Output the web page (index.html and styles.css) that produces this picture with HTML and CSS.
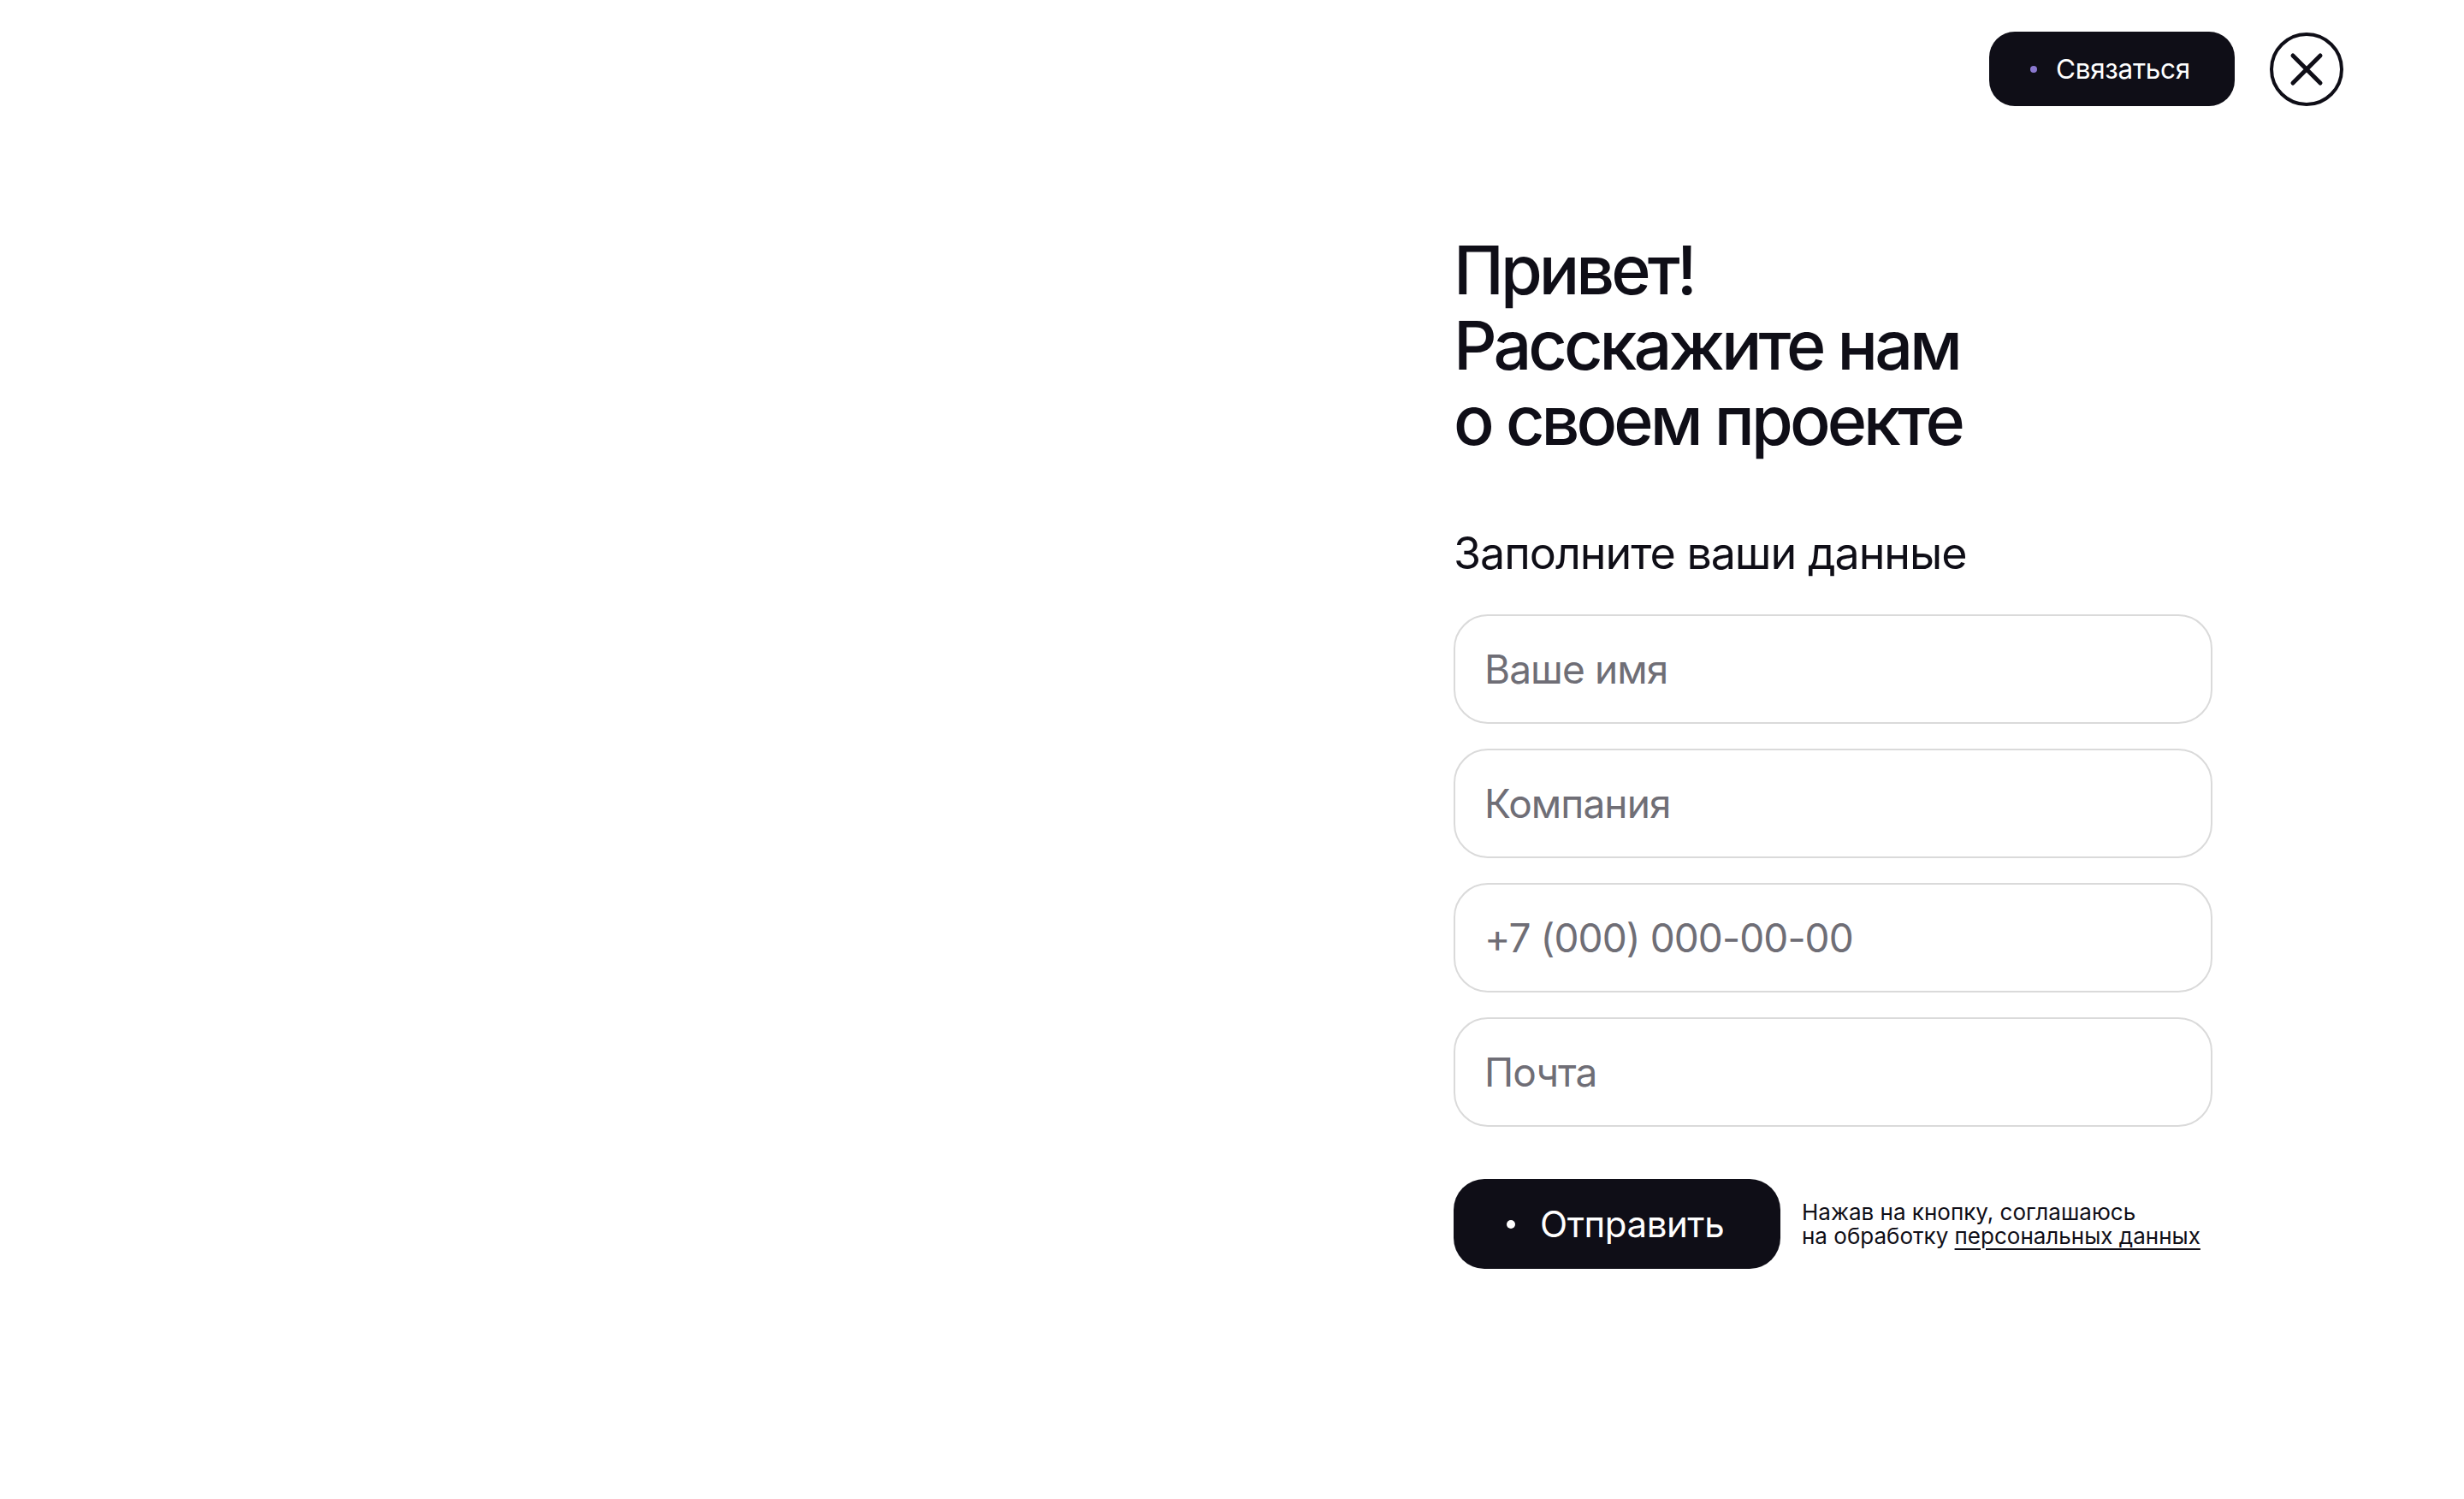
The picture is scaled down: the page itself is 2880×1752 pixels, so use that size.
FILE: index.html
```html
<!DOCTYPE html>
<html lang="ru">
<head>
<meta charset="utf-8">
<title>Связаться</title>
<link rel="stylesheet" href="styles.css">
</head>
<body>
<div class="page">
  <header class="topbar">
    <button class="contact-btn" type="button"><span class="contact-dot"></span>Связаться</button>
    <button class="close-btn" type="button" aria-label="Закрыть">
      <svg viewBox="0 0 40 40" width="40" height="40"><path d="M4 4 L36 36 M36 4 L4 36" fill="none" stroke="#0f0e17" stroke-width="5" stroke-linecap="round"/></svg>
    </button>
  </header>
  <main class="layout">
    <div class="blank"></div>
    <section class="form-panel">
      <h1 class="title">Привет!<br>Расскажите нам<br>о своем проекте</h1>
      <h2 class="subtitle">Заполните ваши данные</h2>
      <form class="form">
        <input class="field" type="text" placeholder="Ваше имя">
        <input class="field" type="text" placeholder="Компания">
        <input class="field" type="tel" placeholder="+7 (000) 000-00-00">
        <input class="field" type="email" placeholder="Почта">
        <div class="submit-row">
          <button class="submit-btn" type="button"><span class="submit-dot"></span>Отправить</button>
          <p class="consent">Нажав на кнопку, соглашаюсь<br>на обработку <a href="#" class="consent-link">персональных данных</a></p>
        </div>
      </form>
    </section>
  </main>
</div>
</body>
</html>
```

FILE: styles.css
```css
* { box-sizing: border-box; }

html, body {
  margin: 0;
  padding: 0;
  background: #ffffff;
}

body {
  font-family: Inter, "Noto Sans", "Liberation Sans", sans-serif;
  color: #0f0e17;
}

.page {
  width: 2880px;
  min-height: 1752px;
}

.topbar {
  display: flex;
  justify-content: flex-end;
  align-items: center;
  gap: 41px;
  padding: 37px 141px 0 0;
}

.contact-btn {
  display: flex;
  align-items: center;
  gap: 22px;
  height: 87px;
  width: 287px;
  padding: 0 0 0 48px;
  border: none;
  border-radius: 30px;
  background: #0f0e17;
  color: #ffffff;
  font-family: Inter, "Noto Sans", sans-serif;
  font-size: 31.5px;
  letter-spacing: -0.01em;
  cursor: pointer;
}

.contact-dot {
  width: 8px;
  height: 8px;
  border-radius: 50%;
  background: #8a78cf;
  flex: none;
}

.close-btn {
  width: 86px;
  height: 86px;
  border-radius: 50%;
  border: 4px solid #0f0e17;
  background: #ffffff;
  display: flex;
  align-items: center;
  justify-content: center;
  padding: 0;
  cursor: pointer;
}

.close-btn svg {
  width: 40px;
  height: 40px;
  display: block;
}

.layout {
  display: grid;
  grid-template-columns: 1699px 887px;
}

.form-panel {
  padding-top: 147px;
  display: flex;
  flex-direction: column;
}

.title {
  margin: 0;
  font-size: 79px;
  line-height: 88px;
  font-weight: 500;
  letter-spacing: -0.05em;
}

.subtitle {
  margin: 83px 0 0 0;
  font-size: 52px;
  line-height: 58px;
  font-weight: 400;
  letter-spacing: -0.02em;
}

.form {
  margin-top: 42px;
  display: flex;
  flex-direction: column;
  gap: 29px;
}

.field {
  width: 887px;
  height: 128px;
  border: 2px solid #dadada;
  border-radius: 40px;
  padding: 0 0 0 34px;
  font-family: Inter, "Noto Sans", sans-serif;
  font-size: 46px;
  letter-spacing: -0.02em;
  color: #0f0e17;
  background: #ffffff;
  outline: none;
}

.field::placeholder {
  color: #6f6e76;
}

.submit-row {
  margin-top: 32px;
  display: flex;
  align-items: center;
  gap: 25px;
}

.submit-btn {
  display: flex;
  align-items: center;
  gap: 29px;
  width: 382px;
  height: 105px;
  padding: 0 0 0 62px;
  border: none;
  border-radius: 36px;
  background: #0f0e17;
  color: #ffffff;
  font-family: Inter, "Noto Sans", sans-serif;
  font-size: 42px;
  letter-spacing: -0.01em;
  cursor: pointer;
  flex: none;
}

.submit-dot {
  width: 10px;
  height: 10px;
  border-radius: 50%;
  background: #ffffff;
  flex: none;
}

.consent {
  margin: 0;
  font-size: 26px;
  line-height: 28px;
  color: #0f0e17;
  letter-spacing: 0;
}

.consent-link {
  color: #0f0e17;
  text-decoration: underline;
  text-decoration-thickness: 2px;
  text-underline-offset: 5px;
}
```
